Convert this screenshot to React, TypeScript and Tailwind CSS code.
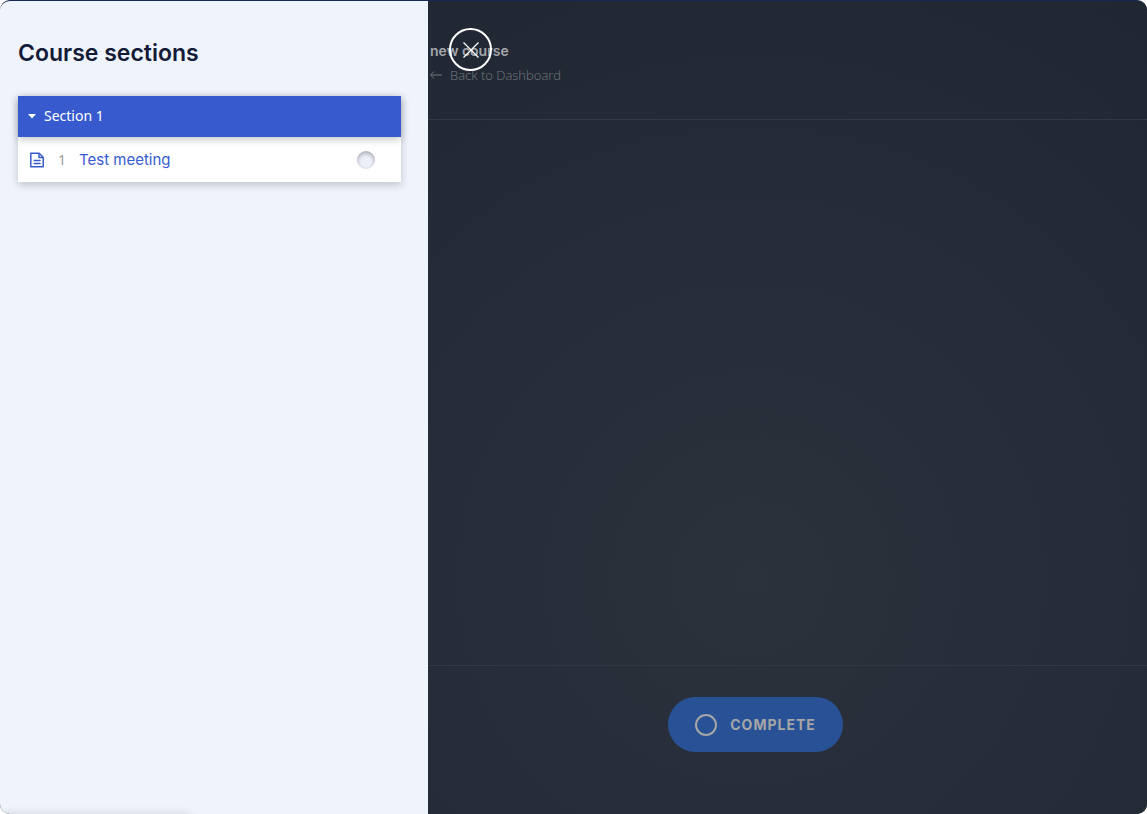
import { useState } from 'react';

const lessons = [{ id: 1, title: 'Test meeting' }];

function DocumentIcon() {
  return (
    <svg className="h-4 w-4 shrink-0" viewBox="0 0 16 16" fill="none" stroke="currentColor" strokeWidth={1.5} strokeLinejoin="round">
      <path d="M1.8 1.2h8.4l4 4v9.6H1.8z" />
      <path d="M10 1.4v4h4" />
      <path strokeLinecap="round" d="M5.2 8.4h5.8M5.2 11.4h5.8" />
    </svg>
  );
}

function ArrowLeftIcon() {
  return (
    <svg className="h-3 w-3 shrink-0" viewBox="0 0 12 12" fill="none" stroke="currentColor" strokeWidth={1}>
      <path d="M12 6H.8M4 2.5L.6 6 4 9.5" />
    </svg>
  );
}

export default function App() {
  const [open, setOpen] = useState(true);
  const [done, setDone] = useState(false);

  return (
    <div className="bg-white">
      <div className="flex min-h-screen overflow-hidden rounded-[10px] border-t border-[#142a54] bg-[#202632] font-['Inter',sans-serif]">
        {/* Course sections drawer */}
        <aside className="relative w-[428px] shrink-0 overflow-hidden bg-[#eff4fc] pt-9 pr-[27px] pl-[18px]">
          <h1 className="text-[23px] leading-8 font-semibold text-[#141b38]">Course sections</h1>

          <div className="mt-[27px] shadow-[0_3px_8px_rgba(0,0,0,0.2)]">
            <button
              type="button"
              aria-expanded={open}
              onClick={() => setOpen(!open)}
              className="relative flex h-[41px] w-full items-center gap-2 bg-[#375bcf] pb-0.5 pl-[10px] font-['Noto_Sans',sans-serif] text-sm text-white shadow-[0_2px_8px_rgba(0,0,0,0.25)]"
            >
              <svg className="h-2 w-2" viewBox="0 0 8 8" fill="currentColor">
                <path d="M0 2h8L4 6.5z" />
              </svg>
              Section 1
            </button>
            {open && (
              <ul className="bg-white">
                {lessons.map((lesson) => (
                  <li key={lesson.id} className="flex h-[45px] items-center pr-[26px] pl-[11px] text-[#375bcf]">
                    <DocumentIcon />
                    <span className="w-[34px] pl-[13px] font-['Noto_Sans',sans-serif] text-sm text-[#999999]">{lesson.id}</span>
                    <a href="#lesson" className="grow text-[15px] leading-5">
                      {lesson.title}
                    </a>
                    <input
                      type="checkbox"
                      aria-label={lesson.title}
                      checked={done}
                      onChange={() => setDone(!done)}
                      className="h-[18px] w-[18px] appearance-none rounded-full bg-[#edf0f8] shadow-[inset_0_2px_4px_rgba(0,0,30,0.3)] checked:bg-[#375bcf]"
                    />
                  </li>
                ))}
              </ul>
            )}
          </div>

          <div className="absolute -bottom-2 left-0 h-2 w-[190px] shadow-[0_0_8px_rgba(0,0,0,0.15)]"></div>
        </aside>

        {/* Course page behind the drawer */}
        <main className="relative flex min-w-0 grow flex-col bg-[radial-gradient(circle_at_45%_71%,#2c323c_0%,#252b37_55%,#202632_100%)]">
          <header className="h-[119px] border-b border-[#343a45] pt-10 pl-0.5">
            <h2 className="text-sm leading-5 font-semibold text-[#a4a7ad]">new course</h2>
            <a
              href="#dashboard"
              className="mt-1 inline-flex items-center gap-2 font-['Open_Sans',sans-serif] text-[13px] leading-5 font-light text-[#747981]"
            >
              <ArrowLeftIcon />
              Back to Dashboard
            </a>
          </header>

          <button
            type="button"
            aria-label="Close"
            className="absolute top-[27px] left-[21px] flex h-[43px] w-[43px] items-center justify-center rounded-full border-2 border-white text-white"
          >
            <svg className="h-4 w-4" viewBox="0 0 16 16" fill="none" stroke="currentColor" strokeWidth={1.3}>
              <path d="M.5.5l15 15M15.5.5l-15 15" />
            </svg>
          </button>

          <div className="grow"></div>

          <footer className="flex h-[149px] justify-center border-t border-[#323843] pt-[31px] pr-16">
            <button
              type="button"
              className="flex h-[55px] items-center gap-[13px] rounded-full bg-[#295296] px-[27px] text-sm font-bold tracking-[1px] text-[#a6a6a6]"
            >
              <span className="h-[22px] w-[22px] rounded-full border-2 border-[#a6a6a6]"></span>
              COMPLETE
            </button>
          </footer>
        </main>
      </div>
    </div>
  );
}
